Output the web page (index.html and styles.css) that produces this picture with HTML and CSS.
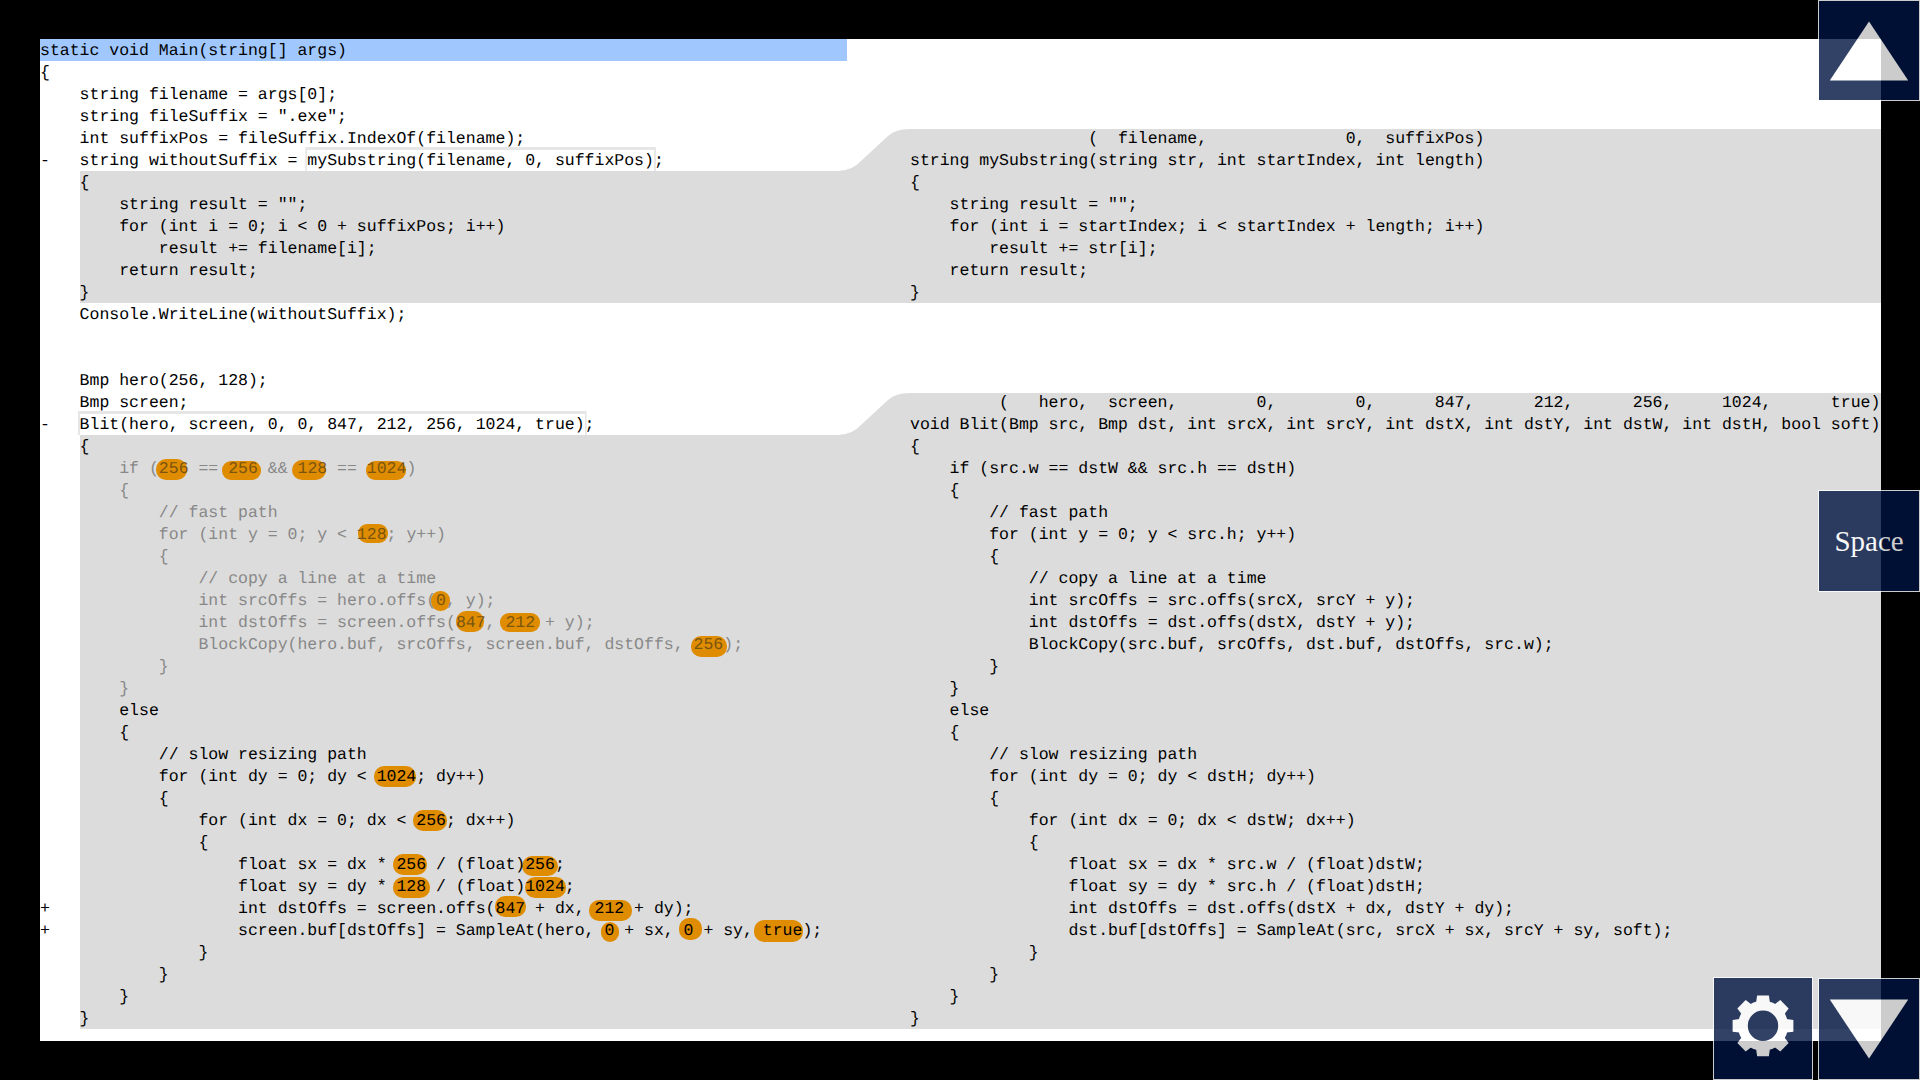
FILE: index.html
```html
<!DOCTYPE html>
<html lang="en">
<head>
<meta charset="utf-8">
<title>Inline function viewer</title>
<link rel="stylesheet" href="styles.css">
</head>
<body>
<main class="stage">
<svg class="layer" viewBox="40 39 1841 1002" aria-hidden="true">
<path class="band" d="M80 171H838Q852 171 862 160L888 136Q896 129 909 129H1881V303H80Z"/>
<path class="band" d="M80 435H838Q852 435 862 424L888 400Q896 393 909 393H1881V1029H80Z"/>
<g class="blobs">
<rect x="156" y="459" width="31" height="21" rx="10"/>
<rect x="222" y="461" width="39" height="19" rx="9"/>
<rect x="292" y="460" width="34" height="20" rx="10"/>
<rect x="366" y="461" width="40" height="19" rx="9"/>
<rect x="358" y="524" width="30" height="19" rx="9"/>
<rect x="431" y="591" width="19" height="20" rx="9"/>
<rect x="456" y="611" width="28" height="21" rx="10"/>
<rect x="500" y="613" width="40" height="19" rx="9"/>
<rect x="691" y="636" width="36" height="21" rx="10"/>
<rect x="374" y="766" width="42" height="21" rx="10"/>
<rect x="413" y="810" width="34" height="21" rx="10"/>
<rect x="393" y="854" width="34" height="21" rx="10"/>
<rect x="522" y="856" width="36" height="20" rx="10"/>
<rect x="393" y="877" width="37" height="21" rx="10"/>
<rect x="525" y="877" width="41" height="21" rx="10"/>
<rect x="495" y="896" width="31" height="21" rx="10"/>
<rect x="589" y="900" width="43" height="21" rx="10"/>
<rect x="601" y="922" width="18" height="20" rx="9"/>
<rect x="679" y="918" width="23" height="22" rx="10"/>
<rect x="754" y="920" width="49" height="22" rx="10"/>
</g>
</svg>
<div class="panes">
<pre class="code caller"><span class="current">static void Main(string[] args)</span>{
    string filename = args[0];
    string fileSuffix = ".exe";
    int suffixPos = fileSuffix.IndexOf(filename);
-   string withoutSuffix = <span class="call">mySubstring(filename, 0, suffixPos)</span>;
    {
        string result = "";
        for (int i = 0; i &lt; 0 + suffixPos; i++)
            result += filename[i];
        return result;
    }
    Console.WriteLine(withoutSuffix);


    Bmp hero(256, 128);
    Bmp screen;
-   <span class="call">Blit(hero, screen, 0, 0, 847, 212, 256, 1024, true)</span>;
    {<span class="dim">        if (<b>256</b> == <b>256</b> &amp;&amp; <b>128</b> == <b>1024</b>)
        {
            // fast path
            for (int y = 0; y &lt; <b>128</b>; y++)
            {
                // copy a line at a time
                int srcOffs = hero.offs(<b>0</b>, y);
                int dstOffs = screen.offs(<b>847</b>, <b>212</b> + y);
                BlockCopy(hero.buf, srcOffs, screen.buf, dstOffs, <b>256</b>);
            }
        }</span>        else
        {
            // slow resizing path
            for (int dy = 0; dy &lt; 1024; dy++)
            {
                for (int dx = 0; dx &lt; 256; dx++)
                {
                    float sx = dx * 256 / (float)256;
                    float sy = dy * 128 / (float)1024;
+                   int dstOffs = screen.offs(847 + dx, 212 + dy);
+                   screen.buf[dstOffs] = SampleAt(hero, 0 + sx, 0 + sy, true);
                }
            }
        }
    }</pre>
<div class="callee">
<pre class="code">                  (  filename,              0,  suffixPos)
string mySubstring(string str, int startIndex, int length)
{
    string result = "";
    for (int i = startIndex; i &lt; startIndex + length; i++)
        result += str[i];
    return result;
}</pre>
<pre class="code second">         (   hero,  screen,        0,        0,      847,      212,      256,     1024,      true)
void Blit(Bmp src, Bmp dst, int srcX, int srcY, int dstX, int dstY, int dstW, int dstH, bool soft)
{
    if (src.w == dstW &amp;&amp; src.h == dstH)
    {
        // fast path
        for (int y = 0; y &lt; src.h; y++)
        {
            // copy a line at a time
            int srcOffs = src.offs(srcX, srcY + y);
            int dstOffs = dst.offs(dstX, dstY + y);
            BlockCopy(src.buf, srcOffs, dst.buf, dstOffs, src.w);
        }
    }
    else
    {
        // slow resizing path
        for (int dy = 0; dy &lt; dstH; dy++)
        {
            for (int dx = 0; dx &lt; dstW; dx++)
            {
                float sx = dx * src.w / (float)dstW;
                float sy = dy * src.h / (float)dstH;
                int dstOffs = dst.offs(dstX + dx, dstY + dy);
                dst.buf[dstOffs] = SampleAt(src, srcX + sx, srcY + sy, soft);
            }
        }
    }
}</pre>
</div>
</div>
</main>
<button class="btn btn-up" aria-label="Up"><svg viewBox="0 0 102 101"><path d="M51 21L91 81H11Z"/></svg></button>
<button class="btn btn-space">Space</button>
<button class="btn btn-gear" aria-label="Settings"><svg viewBox="0 0 100 103">
<g transform="translate(50 48.7)">
<circle class="ring" r="20.5"/>
<path d="M-7-24L-6-31H6L7-24Z"/>
<path d="M-7-24L-6-31H6L7-24Z" transform="rotate(45)"/>
<path d="M-7-24L-6-31H6L7-24Z" transform="rotate(90)"/>
<path d="M-7-24L-6-31H6L7-24Z" transform="rotate(135)"/>
<path d="M-7-24L-6-31H6L7-24Z" transform="rotate(180)"/>
<path d="M-7-24L-6-31H6L7-24Z" transform="rotate(225)"/>
<path d="M-7-24L-6-31H6L7-24Z" transform="rotate(270)"/>
<path d="M-7-24L-6-31H6L7-24Z" transform="rotate(315)"/>
</g></svg></button>
<button class="btn btn-down" aria-label="Down"><svg viewBox="0 0 102 102"><path d="M11 21H91L51 81Z"/></svg></button>
</body>
</html>
```
FILE: styles.css
```css
html, body {
  margin: 0;
  height: 100%;
  background: #000;
  overflow: hidden;
}

body {
  padding: 39px 39px 39px 40px;
  box-sizing: border-box;
}

.stage {
  position: relative;
  height: 1002px;
  background: #fff;
}

.layer {
  position: absolute;
  inset: 0;
  width: 100%;
  height: 100%;
}

.band {
  fill: #dcdcdc;
}

.blobs rect {
  fill: #e08c00;
}

.panes {
  position: relative;
  display: flex;
  padding-top: 1px;
}

.code {
  margin: 0;
  font-family: "Liberation Mono", monospace;
  font-size: 16.5px;
  line-height: 22px;
  color: #000;
  text-rendering: geometricPrecision;
  white-space: pre;
}

.caller {
  flex: 0 0 870px;
}

.callee {
  padding-top: 88px;
}

.second {
  margin-top: 88px;
}

.current {
  display: block;
  width: 807px;
  height: 21px;
  margin: -1px 0 1px;
  padding-top: 1px;
  background: #a0c8ff;
}

.call {
  display: inline-block;
  box-shadow: 0 -1px 0 2px #e6e6e6;
  clip-path: inset(-3px -2px 1px -2px);
}

.dim {
  display: block;
  color: #888;
}

.dim b {
  font-weight: normal;
  color: #7a5510;
}

.btn {
  position: absolute;
  box-sizing: border-box;
  width: 102px;
  padding: 0;
  right: 0;
  background: #001442;
  border: 1px solid #fff;
  opacity: 0.8;
  color: #fff;
}

.btn svg {
  display: block;
  width: 100%;
  height: 100%;
  fill: #fff;
}

.btn-up {
  top: 0;
  height: 101px;
}

.btn-space {
  top: 490px;
  height: 102px;
  font-family: "Liberation Serif", serif;
  font-size: 29px;
}

.btn-gear {
  top: 977px;
  right: 107px;
  width: 100px;
  height: 103px;
}

.btn-down {
  top: 978px;
  height: 102px;
}

.ring {
  fill: none;
  stroke: #fff;
  stroke-width: 10px;
}
```
